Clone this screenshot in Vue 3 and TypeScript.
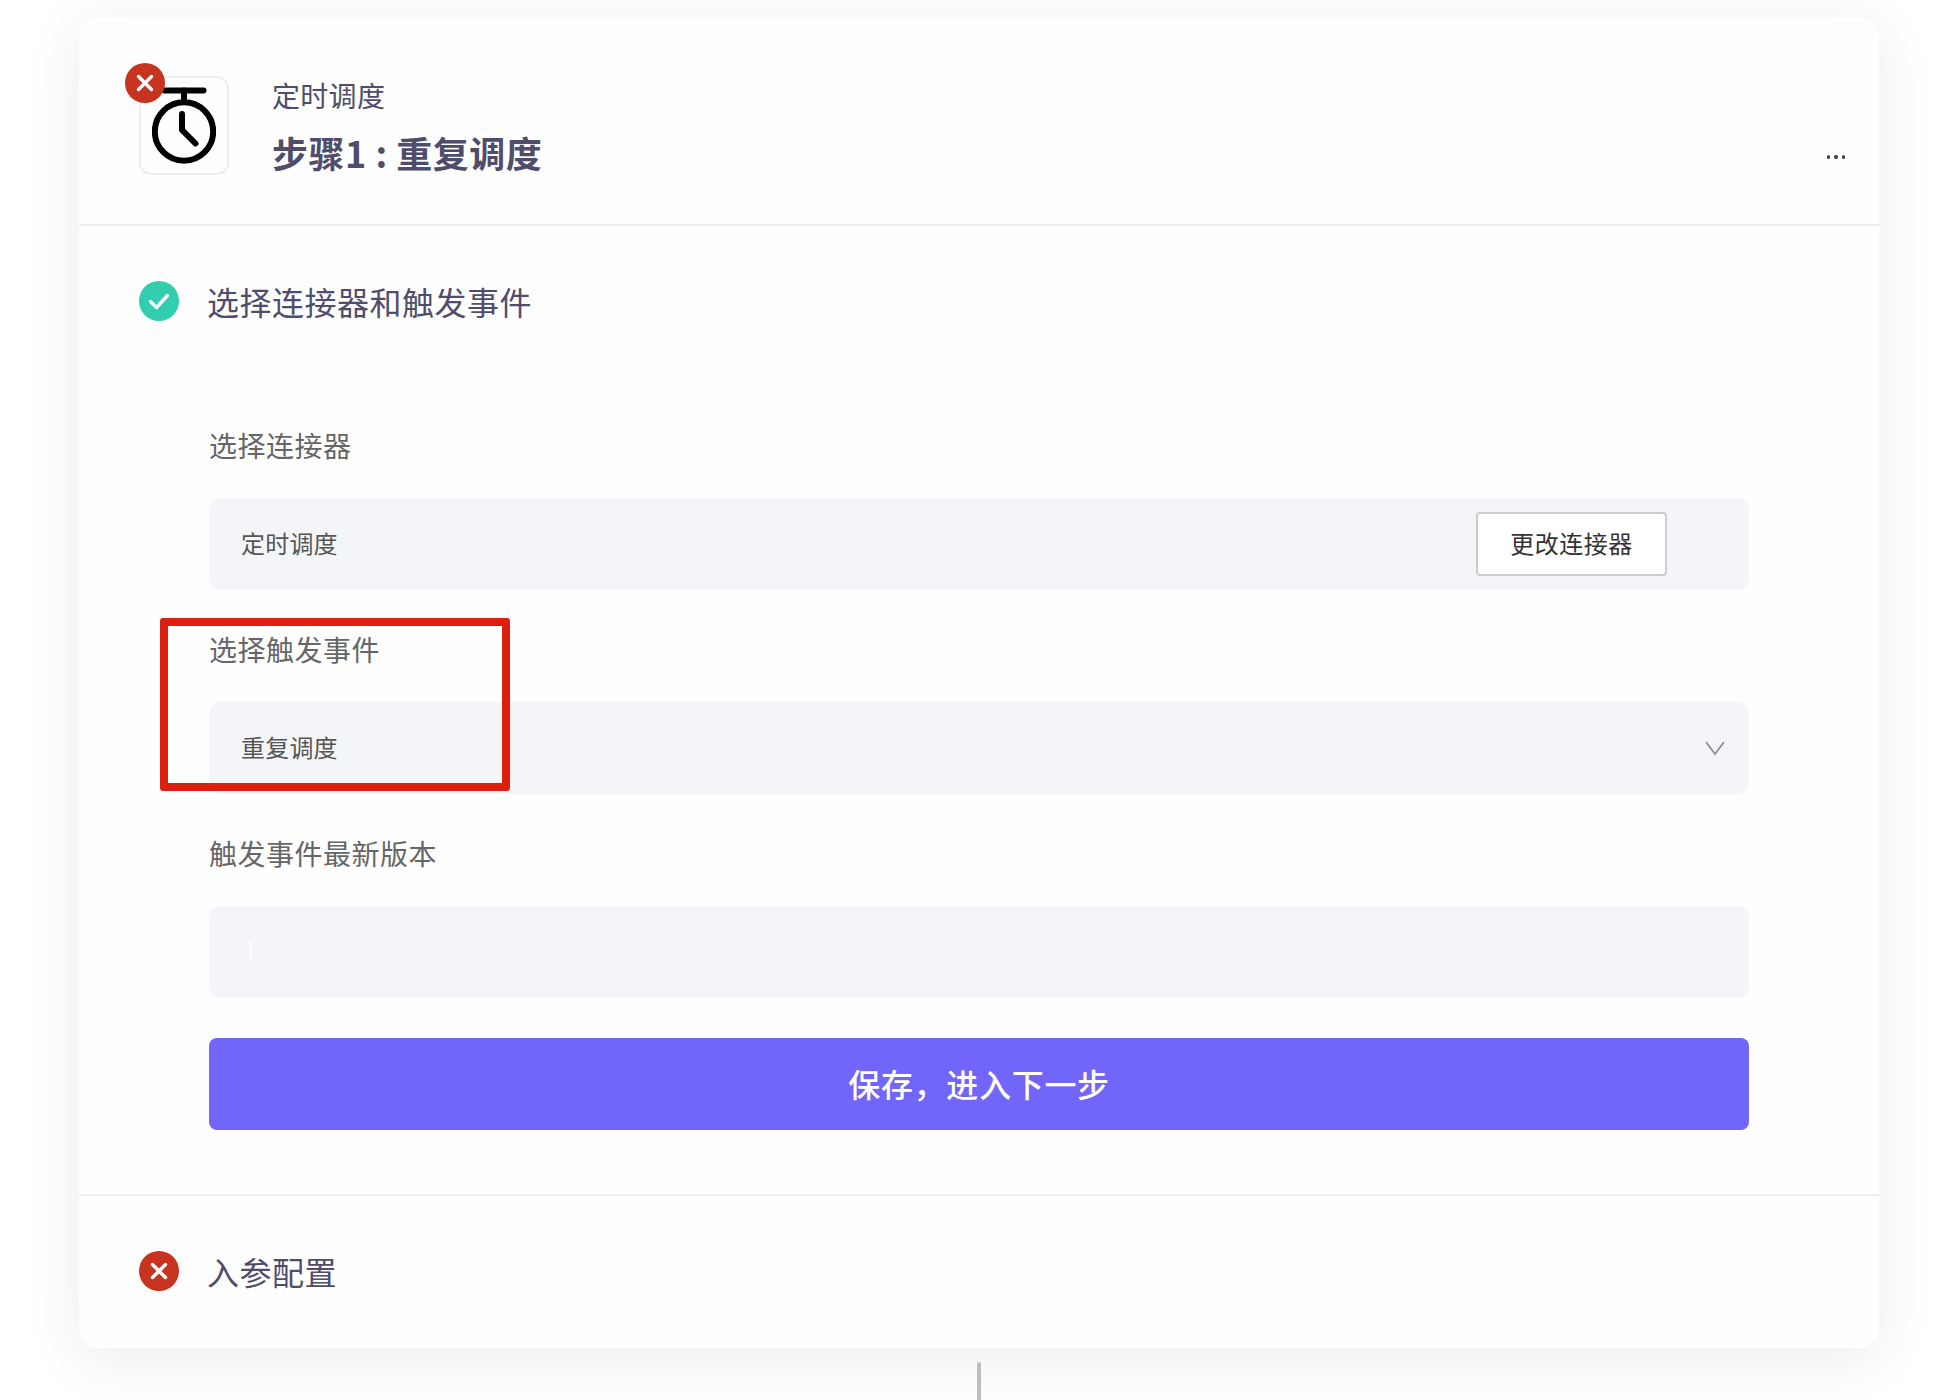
<script setup lang="ts">
const fields = [
  { label: '选择连接器', value: '定时调度', kind: 'connector' },
  { label: '选择触发事件', value: '重复调度', kind: 'select' },
  { label: '触发事件最新版本', value: '1', kind: 'version' },
]
</script>

<template>
  <div class="page">
    <main class="card">
      <header class="head">
        <div class="logo">
          <svg class="clock" viewBox="0 0 64 80" width="64" height="80" fill="none" stroke="#000" stroke-width="6" stroke-linecap="round">
            <path d="M12.5 3.5H51.5" />
            <path d="M32 3.5V15" />
            <circle cx="32" cy="44.5" r="29.2" />
            <path d="M30 27V43L43.5 56.5" stroke-linejoin="round" />
          </svg>
          <span class="badge">
            <svg viewBox="0 0 40 40" width="40" height="40" stroke="#fff" stroke-width="3.4" stroke-linecap="round">
              <path d="M13.5 13.5L26.5 26.5M26.5 13.5L13.5 26.5" />
            </svg>
          </span>
        </div>
        <div class="titles">
          <div class="app-name">定时调度</div>
          <h1 class="step-name">步骤1 : 重复调度</h1>
        </div>
        <div class="more"><i></i><i></i><i></i></div>
      </header>

      <section class="config">
        <div class="section-title">
          <svg viewBox="0 0 40 40" width="40" height="40">
            <circle cx="20" cy="20" r="20" fill="#30ceaf" />
            <path d="M11.5 20.5L17.5 26.5L28.5 14.5" fill="none" stroke="#fff" stroke-width="3.4" stroke-linecap="round" stroke-linejoin="round" />
          </svg>
          <span>选择连接器和触发事件</span>
        </div>

        <div class="form">
          <div v-for="f in fields" :key="f.kind" class="field">
            <div class="label">{{ f.label }}</div>
            <div class="control" :class="f.kind">
              <span class="value">{{ f.value }}</span>
              <button v-if="f.kind === 'connector'" class="change">更改连接器</button>
              <svg v-if="f.kind === 'select'" class="chevron" viewBox="0 0 20 16" width="20" height="16" fill="none" stroke="#8f8f8f" stroke-width="1.8">
                <path d="M1 2L10 14L19 2" />
              </svg>
            </div>
          </div>
          <button class="save">保存，进入下一步</button>
        </div>
        <div class="highlight"></div>
      </section>

      <section class="params">
        <svg viewBox="0 0 40 40" width="40" height="40">
          <circle cx="20" cy="20" r="20" fill="#c63420" />
          <path d="M13.5 13.5L26.5 26.5M26.5 13.5L13.5 26.5" stroke="#fff" stroke-width="3.4" stroke-linecap="round" />
        </svg>
        <span>入参配置</span>
      </section>
    </main>
    <div class="connector-line"></div>
  </div>
</template>

<style>
html, body { margin: 0; background: #fff; }
</style>

<style scoped>
.page {
  width: 1938px;
  height: 1400px;
  box-sizing: border-box;
  padding: 17px 59px 0 79px;
  overflow: hidden;
  font-family: "Noto Sans CJK SC", "Liberation Sans", sans-serif;
  display: flex;
  flex-direction: column;
  align-items: center;
}
.card {
  width: 1800px;
  height: 1331px;
  flex: none;
  background: #fefefe;
  border-radius: 20px;
  box-shadow: 0 10px 60px rgba(0, 0, 0, 0.08);
  display: flex;
  flex-direction: column;
}
.head {
  height: 209px;
  flex: none;
  box-sizing: border-box;
  border-bottom: 2px solid #efefef;
  padding: 59px 34px 0 60px;
  display: flex;
  align-items: flex-start;
}
.logo {
  position: relative;
  width: 90px;
  height: 99px;
  box-sizing: border-box;
  border: 2px solid #eeeeee;
  border-radius: 12px;
  display: flex;
  justify-content: center;
  flex: none;
}
.clock { margin-top: 9px; }
.badge {
  position: absolute;
  left: -16px;
  top: -15px;
  width: 40px;
  height: 40px;
  border-radius: 50%;
  background: #c63420;
}
.badge svg { display: block; }
.titles {
  margin-left: 43px;
  flex: 1;
  color: #4f4d6b;
}
.app-name {
  font-size: 28px;
  line-height: 40px;
  margin-top: -1px;
  letter-spacing: 0.3px;
}
.step-name {
  margin: 13px 0 0;
  font-size: 36px;
  line-height: 49px;
  font-weight: 700;
  letter-spacing: 0.5px;
}
.more {
  display: flex;
  gap: 4px;
  margin-top: 79px;
}
.more i {
  width: 3.5px;
  height: 3.5px;
  border-radius: 50%;
  background: #444;
}
.config {
  position: relative;
  flex: none;
  height: 970px;
  box-sizing: border-box;
  border-bottom: 2px solid #efefef;
  padding: 55px 130px 0 60px;
}
.section-title, .params {
  display: flex;
  align-items: center;
  gap: 28px;
  color: #4f4d6b;
  font-size: 32px;
  line-height: 40px;
  letter-spacing: 0.5px;
}
.form {
  margin: 105px 0 0 70px;
  display: flex;
  flex-direction: column;
}
.field { display: flex; flex-direction: column; }
.label {
  font-size: 28px;
  line-height: 38px;
  color: #666666;
  margin-bottom: 34px;
  letter-spacing: 0.5px;
}
.control {
  height: 92px;
  box-sizing: border-box;
  background: #f4f5f9;
  border-radius: 12px;
  padding: 0 24px 0 32px;
  display: flex;
  align-items: center;
  justify-content: space-between;
  margin-bottom: 40px;
  font-size: 24px;
  color: #555555;
}
.value { margin-bottom: 3px; letter-spacing: 0.2px; }
.connector { padding-right: 82px; }
.version .value {
  color: #fff;
  margin-left: 2px;
  font-family: Roboto, sans-serif;
  font-weight: 300;
}
.change {
  width: 191px;
  height: 64px;
  box-sizing: border-box;
  background: #fff;
  border: 2px solid #cccccc;
  border-radius: 4px;
  font: inherit;
  color: #333;
  padding: 0 0 3px;
  letter-spacing: 0.5px;
}
.save {
  height: 92px;
  border: 0;
  border-radius: 8px;
  background: #7166f9;
  color: #fff;
  font: inherit;
  font-size: 32px;
  font-weight: 500;
  letter-spacing: 0.7px;
  padding: 0 0 2px;
}
.highlight {
  position: absolute;
  left: 81px;
  top: 392px;
  width: 350px;
  height: 173px;
  box-sizing: border-box;
  border: 8px solid #dc1f0e;
  border-radius: 3px;
  pointer-events: none;
}
.params {
  padding: 55px 0 0 60px;
}
.connector-line {
  width: 4px;
  height: 60px;
  margin-top: 14px;
  border-radius: 2px;
  background: #bcbdc3;
  flex: none;
}
</style>
